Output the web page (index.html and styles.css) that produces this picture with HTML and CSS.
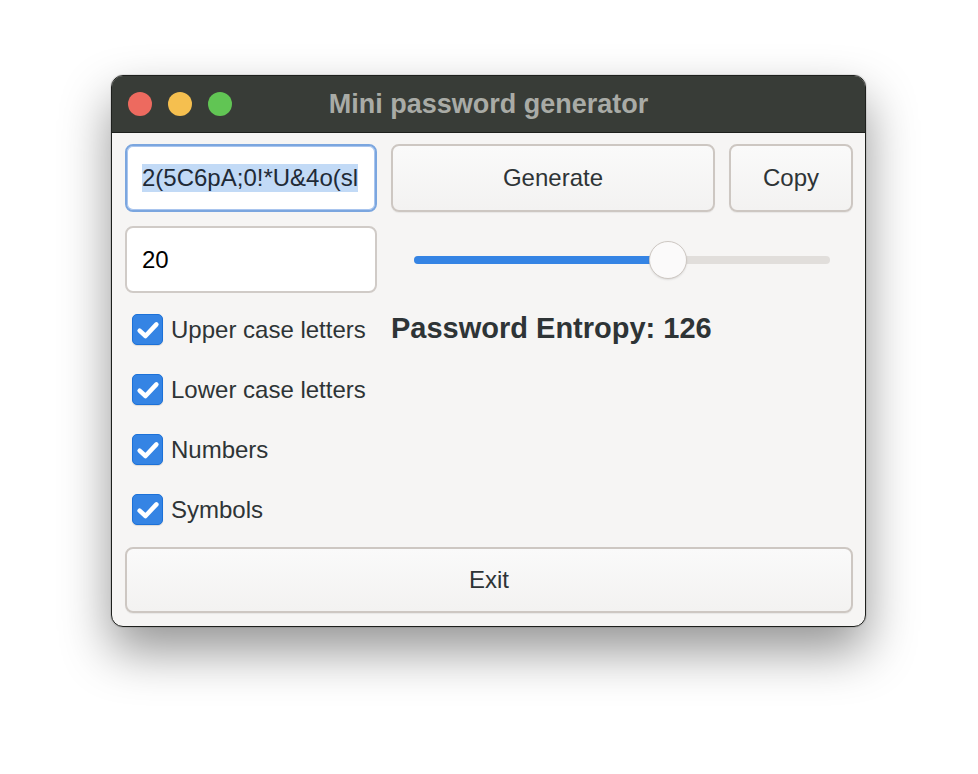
FILE: index.html
```html
<!DOCTYPE html>
<html lang="en">
<head>
  <meta charset="UTF-8" />
  <title>Mini password generator</title>
  <link rel="stylesheet" href="styles.css">
</head>
<body>

<div class="window">
  <div class="titlebar">
    <div class="lights">
      <span class="light red"></span>
      <span class="light yellow"></span>
      <span class="light green"></span>
    </div>
    <h1>Mini password generator</h1>
  </div>

  <div class="content">
    <div class="row">
      <div class="field focus"><span class="sel">2(5C6pA;0!*U&amp;4o(sl</span></div>
      <div class="right-buttons">
        <button class="btn generate">Generate</button>
        <button class="btn copy">Copy</button>
      </div>
    </div>

    <div class="row">
      <div class="field">20</div>
      <div class="slider">
        <div class="track"><div class="fill" style="width:61%"></div></div>
        <div class="thumb" style="left:61%"></div>
      </div>
    </div>

    <div class="row options">
      <div class="checks">
        <label class="check"><span class="box"><svg viewBox="0 0 20 20"><path d="M4 10.5 L8.2 14.3 L16 6" /></svg></span>Upper case letters</label>
        <label class="check"><span class="box"><svg viewBox="0 0 20 20"><path d="M4 10.5 L8.2 14.3 L16 6" /></svg></span>Lower case letters</label>
        <label class="check"><span class="box"><svg viewBox="0 0 20 20"><path d="M4 10.5 L8.2 14.3 L16 6" /></svg></span>Numbers</label>
        <label class="check"><span class="box"><svg viewBox="0 0 20 20"><path d="M4 10.5 L8.2 14.3 L16 6" /></svg></span>Symbols</label>
      </div>
      <div class="entropy">Password Entropy: 126</div>
    </div>

    <button class="btn exit">Exit</button>
  </div>
</div>

</body>
</html>
```

FILE: styles.css
```css
html, body {
  margin: 0;
  background: #ffffff;
}
body {
  font-family: "Liberation Sans", Arial, sans-serif;
  min-height: 774px;
  box-sizing: border-box;
  padding: 75px 0 0 111px;
}
.window {
  box-sizing: border-box;
  width: 755px;
  height: 552px;
  border: 1px solid #1e201d;
  border-radius: 12px;
  overflow: hidden;
  background: #f6f5f4;
  box-shadow: 0 24px 50px rgba(0,0,0,0.42), 0 0 0 1px rgba(0,0,0,0.08);
  display: flex;
  flex-direction: column;
}
.titlebar {
  height: 56px;
  flex-shrink: 0;
  background: #383c37;
  border-bottom: 1px solid #1e201d;
  display: flex;
  align-items: center;
  position: relative;
}
.titlebar h1 {
  flex: 1;
  margin: 0;
  text-align: center;
  font-size: 27px;
  font-weight: bold;
  color: #a9aba6;
}
.lights {
  position: absolute;
  left: 16px;
  top: 16px;
  display: flex;
  gap: 16px;
}
.light {
  width: 24px;
  height: 24px;
  border-radius: 50%;
}
.red { background: #ed6a5f; }
.yellow { background: #f5bf4f; }
.green { background: #61c554; }

.content {
  padding: 11px 12px 13px 13px;
  display: flex;
  flex-direction: column;
  gap: 14px;
}
.row {
  display: flex;
  gap: 14px;
}
.field {
  box-sizing: border-box;
  flex-shrink: 0;
  width: 252px;
  height: 67px;
  background: #ffffff;
  border: 2px solid #d0cbc7;
  border-radius: 8px;
  padding: 0 15px;
  display: flex;
  align-items: center;
  font-size: 24px;
  color: #000000;
  overflow: hidden;
  white-space: nowrap;
}
.field.focus {
  height: 68px;
  border: 2px solid #7ba6df;
  box-shadow: inset 0 0 0 1px #a9c5ee;
}
.sel {
  background: #c2daf6;
  color: #1f2a36;
  line-height: 28px;
}
.right-buttons {
  flex: 1;
  display: flex;
  gap: 14px;
}
.btn {
  font-family: "Liberation Sans", Arial, sans-serif;
  font-size: 24px;
  color: #2e3436;
  background: linear-gradient(#fafafa, #f3f2f1);
  border: 2px solid #cdc7c2;
  border-radius: 8px;
  cursor: pointer;
  box-shadow: 0 1px 1px rgba(0,0,0,0.06);
}
.generate {
  width: 324px;
  height: 68px;
}
.copy {
  flex: 1;
  height: 68px;
}
.slider {
  flex: 1;
  position: relative;
  margin: 0 23px 0 23px;
  display: flex;
  align-items: center;
}
.track {
  width: 100%;
  height: 8px;
  background: #e1dedb;
  border-radius: 4px;
}
.fill {
  height: 100%;
  background: #3584e4;
  border-radius: 4px;
}
.thumb {
  position: absolute;
  top: 50%;
  width: 36px;
  height: 36px;
  margin: -19px 0 0 -19px;
  border-radius: 50%;
  background: #fbfafa;
  border: 1px solid #cdc7c2;
  box-shadow: 0 1px 2px rgba(0,0,0,0.1);
}
.options {
  gap: 14px;
  height: 240px;
}
.checks {
  flex-shrink: 0;
  width: 252px;
  display: flex;
  flex-direction: column;
  padding-top: 7px;
}
.check {
  flex-shrink: 0;
  height: 60px;
  display: flex;
  align-items: flex-start;
  font-size: 24px;
  color: #2e3436;
  gap: 8px;
  padding-left: 7px;
  line-height: 31px;
}
.box {
  width: 31px;
  height: 31px;
  flex-shrink: 0;
  box-sizing: border-box;
  border-radius: 5px;
  background: #3584e4;
  border: 1px solid #1c71d8;
  display: flex;
  align-items: center;
  justify-content: center;
  box-shadow: 0 1px 1px rgba(0,0,0,0.12);
}
.box svg {
  width: 28px;
  height: 28px;
}
.box path {
  fill: none;
  stroke: #ffffff;
  stroke-width: 3.2;
  stroke-linecap: round;
  stroke-linejoin: round;
}
.entropy {
  font-size: 29px;
  font-weight: bold;
  color: #2e3436;
  padding-top: 5px;
}
.exit {
  width: 100%;
  height: 66px;
  margin-top: -14px;
  flex-shrink: 0;
}
```
